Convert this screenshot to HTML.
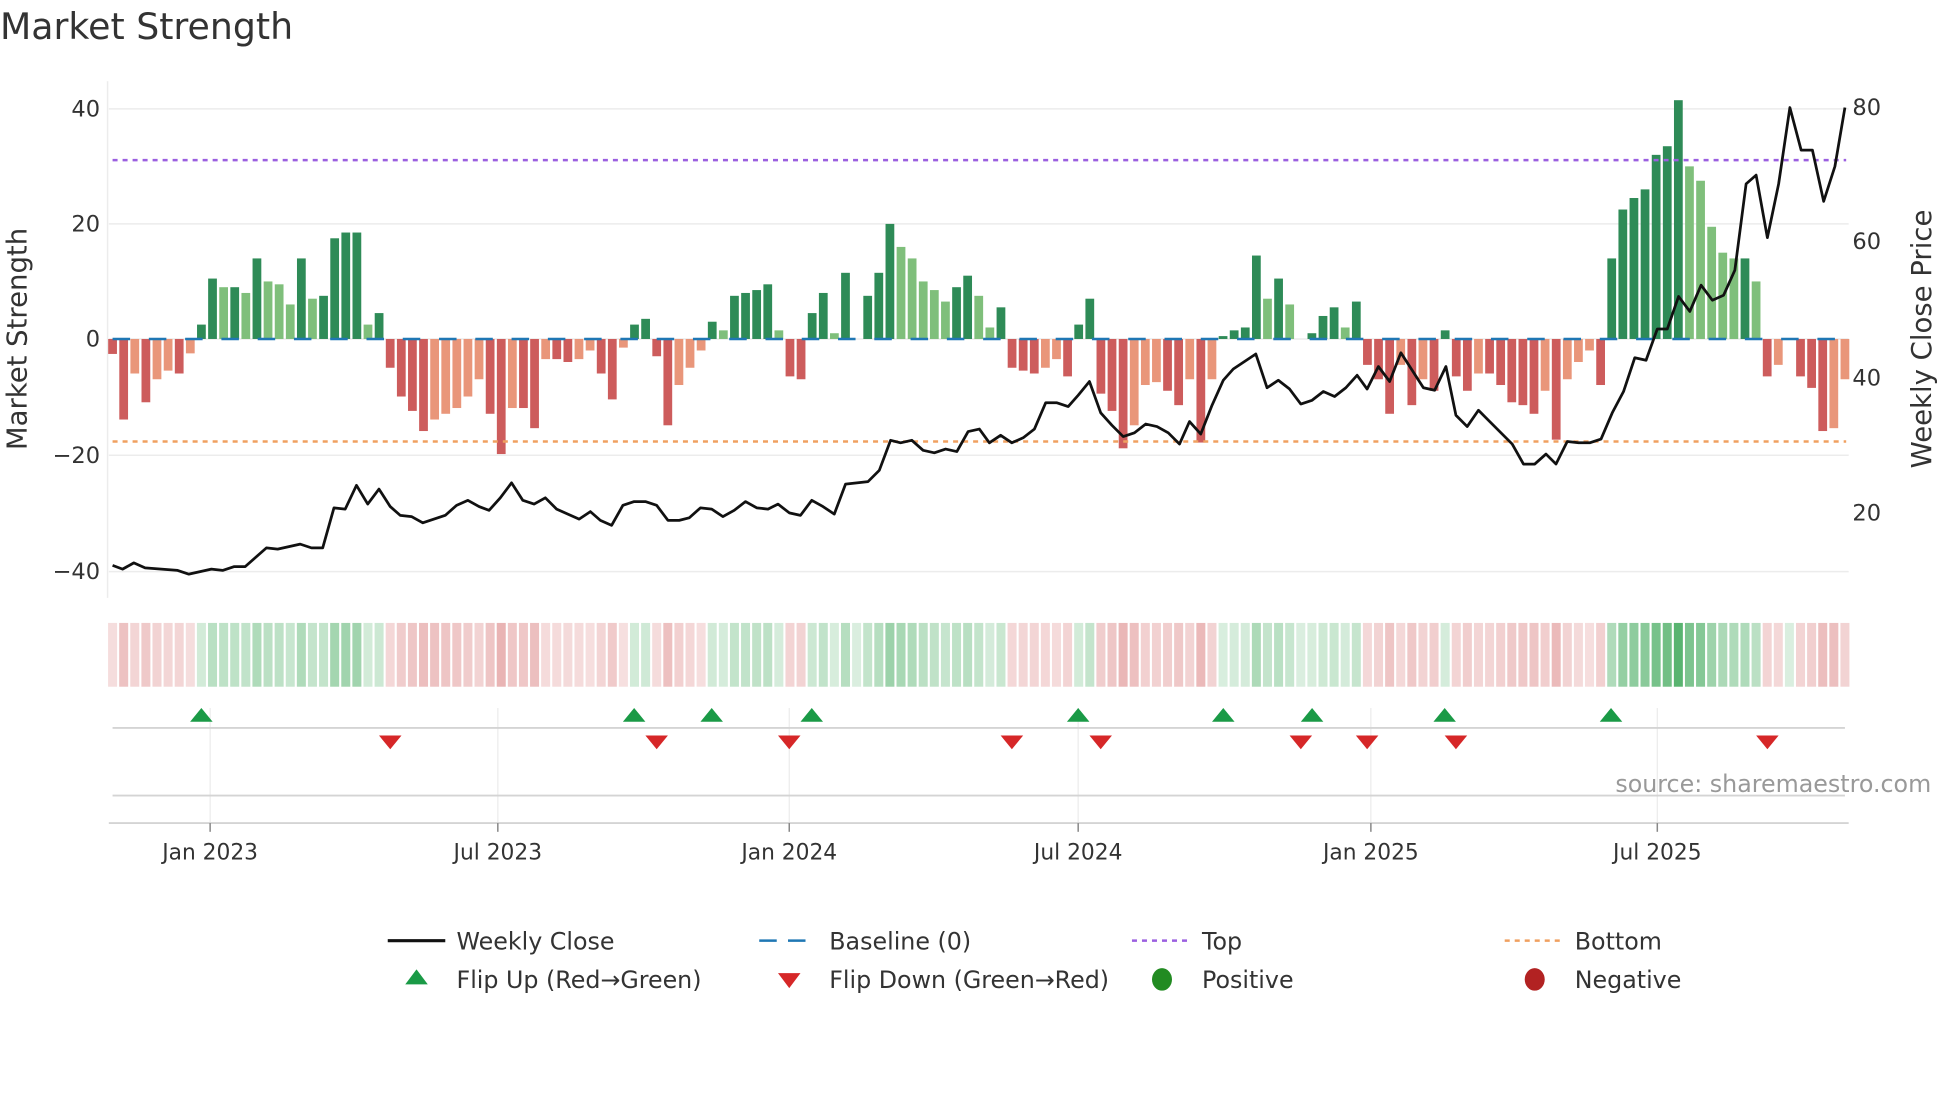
<!DOCTYPE html>
<html><head><meta charset="utf-8"><style>
html,body{margin:0;padding:0;background:#fff;width:1960px;height:1102px;overflow:hidden}
svg{display:block}
text{font-family:"DejaVu Sans","Liberation Sans",sans-serif;fill:#333}
</style></head><body>
<svg id="s" width="1960" height="1102" viewBox="0 0 1567 881" preserveAspectRatio="none" xmlns="http://www.w3.org/2000/svg">
<rect width="1567" height="881" fill="#fff"/>
<text x="0" y="31" font-size="29">Market Strength</text>
<g stroke="#ececec" stroke-width="1.2">
<line x1="87" y1="87" x2="1478" y2="87"/><line x1="87" y1="179" x2="1478" y2="179"/>
<line x1="87" y1="271" x2="1478" y2="271"/><line x1="87" y1="364" x2="1478" y2="364"/>
<line x1="87" y1="457" x2="1478" y2="457"/>
<line x1="86" y1="65" x2="86" y2="478"/>
</g>
<g font-size="18" text-anchor="end">
<text x="80" y="93">40</text><text x="80" y="185">20</text><text x="80" y="277">0</text>
<text x="80" y="370">−20</text><text x="80" y="463">−40</text>
</g>
<g font-size="18">
<text x="1481" y="92">80</text><text x="1481" y="199">60</text><text x="1481" y="308">40</text><text x="1481" y="416">20</text>
</g>
<text font-size="22" text-anchor="middle" transform="translate(21,271) rotate(-90)">Market Strength</text>
<text font-size="22" text-anchor="middle" transform="translate(1544,271) rotate(-90)">Weekly Close Price</text>
<g id="bars"></g>
<line x1="90" y1="271" x2="1476" y2="271" stroke="#1f77b4" stroke-width="2" stroke-dasharray="14 15"/>
<line x1="90" y1="128" x2="1476" y2="128" stroke="#9b5fe0" stroke-width="2" stroke-dasharray="4 4"/>
<line x1="90" y1="353" x2="1476" y2="353" stroke="#f0a060" stroke-width="2" stroke-dasharray="4 4"/>
<polyline id="price" fill="none" stroke="#111" stroke-width="2.2" stroke-linejoin="round"/>
<g id="strip"></g>
<g stroke="#ececec" stroke-width="1">
<line x1="168" y1="566" x2="168" y2="658"/><line x1="398" y1="566" x2="398" y2="658"/>
<line x1="631" y1="566" x2="631" y2="658"/><line x1="862" y1="566" x2="862" y2="658"/>
<line x1="1096" y1="566" x2="1096" y2="658"/><line x1="1325" y1="566" x2="1325" y2="658"/>
</g>
<line x1="90" y1="582" x2="1475" y2="582" stroke="#d4d4d4" stroke-width="1.5"/>
<line x1="90" y1="636" x2="1475" y2="636" stroke="#d4d4d4" stroke-width="1.5"/>
<line x1="87" y1="658" x2="1478" y2="658" stroke="#d4d4d4" stroke-width="1.5"/>
<g id="tri"></g>
<g stroke="#888" stroke-width="1.2">
<line x1="168" y1="658" x2="168" y2="665"/><line x1="398" y1="658" x2="398" y2="665"/>
<line x1="631" y1="658" x2="631" y2="665"/><line x1="862" y1="658" x2="862" y2="665"/>
<line x1="1096" y1="658" x2="1096" y2="665"/><line x1="1325" y1="658" x2="1325" y2="665"/>
</g>
<g font-size="17.4" text-anchor="middle">
<text x="168" y="687">Jan 2023</text><text x="398" y="687">Jul 2023</text><text x="631" y="687">Jan 2024</text>
<text x="862" y="687">Jul 2024</text><text x="1096" y="687">Jan 2025</text><text x="1325" y="687">Jul 2025</text>
</g>
<text x="1544" y="633" font-size="19" text-anchor="end" style="fill:#999">source: sharemaestro.com</text>
<g font-size="19">
<line x1="310" y1="752" x2="356" y2="752" stroke="#111" stroke-width="2.5"/>
<text x="365" y="759">Weekly Close</text>
<line x1="607" y1="752" x2="651" y2="752" stroke="#1f77b4" stroke-width="2" stroke-dasharray="14 9"/>
<text x="663" y="759">Baseline (0)</text>
<line x1="905" y1="752" x2="949" y2="752" stroke="#9b5fe0" stroke-width="2" stroke-dasharray="4 4"/>
<text x="961" y="759">Top</text>
<line x1="1203" y1="752" x2="1247" y2="752" stroke="#f0a060" stroke-width="2" stroke-dasharray="4 4"/>
<text x="1259" y="759">Bottom</text>
<polygon points="333,775 342,787 324,787" fill="#1a9a46"/>
<text x="365" y="790">Flip Up (Red→Green)</text>
<polygon points="622,778 640,778 631,790" fill="#d62728"/>
<text x="663" y="790">Flip Down (Green→Red)</text>
<ellipse cx="929" cy="783" rx="8" ry="9" fill="#228b22"/>
<text x="961" y="790">Positive</text>
<ellipse cx="1227" cy="783" rx="8" ry="9" fill="#b22222"/>
<text x="1259" y="790">Negative</text>
</g>
</svg>
<script>
var V=[-2.6,-14,-6,-11,-7,-5.5,-6,-2.5,2.5,10.5,9,9,8,14,10,9.5,6,14,7,7.5,17.5,18.5,18.5,2.5,4.5,-5,-10,-12.5,-16,-14,-13,-12,-10,-7,-13,-20,-12,-12,-15.5,-3.5,-3.5,-4,-3.5,-2,-6,-10.5,-1.5,2.5,3.5,-3,-15,-8,-5,-2,3,1.5,7.5,8,8.5,9.5,1.5,-6.5,-7,4.5,8,1,11.5,0,7.5,11.5,20,16,14,10,8.5,6.5,9,11,7.5,2,5.5,-5,-5.5,-6,-5,-3.5,-6.5,2.5,7,-9.5,-12.5,-19,-15,-8,-7.5,-9,-11.5,-7,-18,-7,0.5,1.5,2,14.5,7,10.5,6,0,1,4,5.5,2,6.5,-4.5,-7,-13,-4.5,-11.5,-7,-9,1.5,-6.5,-9,-6,-6,-8,-11,-11.5,-13,-9,-17.5,-7,-4,-2,-8,14,22.5,24.5,26,32,33.5,41.5,30,27.5,19.5,15,14,14,10,-6.5,-4.5,0,-6.5,-8.5,-16,-15.5,-7];
var ns="http://www.w3.org/2000/svg";
function el(t,a,p){var e=document.createElementNS(ns,t);for(var k in a)e.setAttribute(k,a[k]);document.getElementById(p).appendChild(e);}
var step=(1475-90)/(V.length-1);
for(var i=0;i<V.length;i++){var v=V[i],x=90+i*step,p=i?V[i-1]:0,c;
 if(v>=0){c=(v>=p)?"#2e8b57":"#7fbf7b";}else{c=(v<=p)?"#cd5c5c":"#e9967a";}
 var h=Math.abs(v)*4.6;
 if(h>0.3)el("rect",{x:x-3.5,y:v>=0?271-h:271,width:7,height:h,fill:c},"bars");
 var a=Math.min(1,0.22+Math.abs(v)/42*0.78);
 el("rect",{x:x-3.6,y:498,width:7.2,height:51,fill:v>=0?"#3aa655":"#d46a6a","fill-opacity":a*0.85},"strip");
}
var P=[90,452,98,455,107,450,116,454,142,456,151,459,169,455,178,456,187,453,196,453,213,438,222,439,240,435,249,438,258,438,267,406,276,407,285,388,294,403,303,391,312,405,320,412,329,413,338,418,356,412,365,404,374,400,383,405,391,408,400,398,409,386,418,400,427,403,436,398,445,407,454,411,463,415,472,409,480,416,489,420,498,404,507,401,516,401,525,404,534,416,543,416,551,414,560,406,569,407,578,413,587,408,596,401,605,406,614,407,622,403,631,410,640,412,649,400,658,405,667,411,676,387,685,386,694,385,703,376,712,352,720,354,729,352,738,360,747,362,756,359,765,361,774,345,783,343,791,354,800,348,809,354,818,350,827,343,836,322,845,322,854,325,862,316,871,305,880,330,889,340,898,349,907,346,916,339,925,341,934,346,943,355,951,337,960,347,969,324,978,304,986,295,995,289,1004,283,1013,310,1022,304,1031,311,1040,323,1049,320,1058,313,1067,317,1076,310,1085,300,1093,311,1102,293,1111,305,1120,282,1129,296,1138,310,1147,312,1156,293,1164,332,1173,341,1182,328,1191,337,1200,346,1209,355,1218,371,1227,371,1236,363,1244,371,1253,353,1262,354,1271,354,1280,351,1289,330,1298,313,1307,286,1316,288,1325,263,1333,263,1342,237,1351,249,1360,228,1369,240,1378,236,1387,216,1396,147,1404,140,1413,190,1422,147,1431,86,1440,120,1449,120,1458,161,1467,133,1475,86];
var s="";for(var j=0;j<P.length;j+=2)s+=P[j]+","+P[j+1]+" ";
document.getElementById("price").setAttribute("points",s);
[161,507,569,649,862,978,1049,1155,1288].forEach(function(x){el("polygon",{points:(x)+",566 "+(x+9)+",577 "+(x-9)+",577",fill:"#1a9a46"},"tri");});
[312,525,631,809,880,1040,1093,1164,1413].forEach(function(x){el("polygon",{points:(x-9)+",588 "+(x+9)+",588 "+x+",599",fill:"#d62728"},"tri");});
</script>
</body></html>
